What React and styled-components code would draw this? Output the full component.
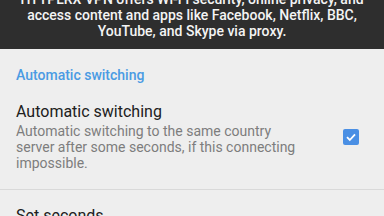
import styled, { createGlobalStyle } from 'styled-components'

const GlobalStyle = createGlobalStyle`
  html, body {
    margin: 0;
    padding: 0;
    background: #eeeeee;
    overflow: hidden;
  }
  body {
    font-family: Roboto, "Noto Sans", sans-serif;
  }
`

const Page = styled.div`
  width: 384px;
  height: 216px;
  overflow: hidden;
  background: #eeeeee;
`

const Banner = styled.div`
  background: #2e2e2e;
  height: 49px;
  overflow: hidden;
`

const BannerText = styled.p`
  margin: -9px 0 0;
  color: #f4f4f4;
  font-size: 14px;
  font-weight: 500;
  line-height: 16px;
  text-align: center;
`

const SectionHeader = styled.div`
  padding: 16px 16px 0;
  color: #4a9be3;
  font-size: 14px;
  font-weight: 500;
  line-height: 20px;
`

const Row = styled.div`
  display: flex;
  align-items: center;
  padding: ${(p) => p.$pad};
  border-bottom: ${(p) => (p.$divider ? '1px solid #d9d9d9' : 'none')};
`

const RowBody = styled.div`
  flex: 1;
`

const Title = styled.div`
  color: #202020;
  font-size: 16px;
  line-height: 20px;
`

const Summary = styled.div`
  margin-top: 1px;
  width: 290px;
  color: #7d7d7d;
  font-size: 14px;
  line-height: 16px;
`

const Check = styled.div`
  width: 16px;
  height: 16px;
  margin: 0 25px 0 8px;
  border-radius: 2px;
  background: #4a8fe4;
  display: flex;
  align-items: center;
  justify-content: center;
`

const CheckBox = () => (
  <Check>
    <svg width="12" height="12" viewBox="0 0 12 12">
      <path d="M2 6.2 L4.8 9 L10 3.4" fill="none" stroke="#fff" strokeWidth="1.8" />
    </svg>
  </Check>
)

const App = () => (
  <Page>
    <GlobalStyle />
    <Banner>
      <BannerText>
        HTTPLRX VPN offers Wi-Fi security, online privacy, and
        <br />
        access content and apps like Facebook, Netflix, BBC,
        <br />
        YouTube, and Skype via proxy.
      </BannerText>
    </Banner>
    <SectionHeader>Automatic switching</SectionHeader>
    <Row $pad="17px 0 18px 16px" $divider>
      <RowBody>
        <Title>Automatic switching</Title>
        <Summary>
          Automatic switching to the same country server after some seconds, if this connecting impossible.
        </Summary>
      </RowBody>
      <CheckBox />
    </Row>
    <Row $pad="16px 0 0 16px">
      <RowBody>
        <Title>Set seconds</Title>
      </RowBody>
    </Row>
  </Page>
)

export default App
